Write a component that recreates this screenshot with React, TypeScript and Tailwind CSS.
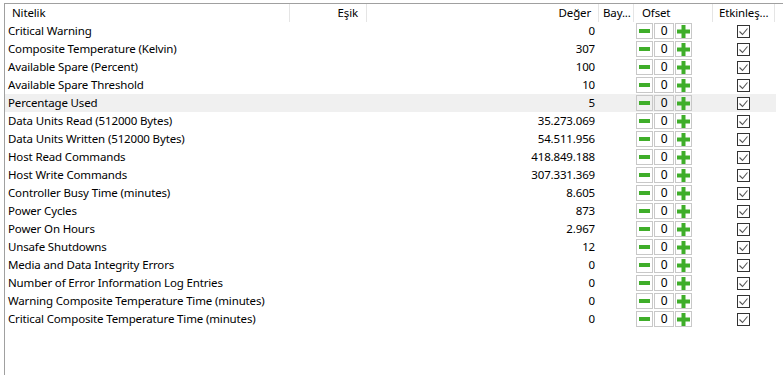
import React from "react";

const rows: [string, string][] = [
  ["Critical Warning", "0"],
  ["Composite Temperature (Kelvin)", "307"],
  ["Available Spare (Percent)", "100"],
  ["Available Spare Threshold", "10"],
  ["Percentage Used", "5"],
  ["Data Units Read (512000 Bytes)", "35.273.069"],
  ["Data Units Written (512000 Bytes)", "54.511.956"],
  ["Host Read Commands", "418.849.188"],
  ["Host Write Commands", "307.331.369"],
  ["Controller Busy Time (minutes)", "8.605"],
  ["Power Cycles", "873"],
  ["Power On Hours", "2.967"],
  ["Unsafe Shutdowns", "12"],
  ["Media and Data Integrity Errors", "0"],
  ["Number of Error Information Log Entries", "0"],
  ["Warning Composite Temperature Time (minutes)", "0"],
  ["Critical Composite Temperature Time (minutes)", "0"],
];

function Offset() {
  return (
    <div className="flex h-[16px] items-stretch">
      <div className="flex w-[17px] items-center justify-center border border-[#c8c8c8]">
        <div className="h-[4px] w-[11px] bg-[#3fae2a]" />
      </div>
      <div className="ml-[1px] flex w-[20px] items-center justify-center border border-[#c8c8c8] text-[12px] leading-none">
        0
      </div>
      <div className="ml-[1px] flex w-[17px] items-center justify-center border border-[#c8c8c8]">
        <svg width="13" height="13" viewBox="0 0 13 13">
          <rect x="4.5" y="0" width="4" height="13" fill="#3fae2a" />
          <rect x="0" y="4.5" width="13" height="4" fill="#3fae2a" />
        </svg>
      </div>
    </div>
  );
}

function Check() {
  return (
    <div className="flex h-[13px] w-[13px] items-center justify-center border border-[#333333] bg-white">
      <svg width="11" height="11" viewBox="0 0 11 11">
        <path d="M1.5 5.5 L4.5 8.5 L9.5 2.5" fill="none" stroke="#555555" strokeWidth="1.1" />
      </svg>
    </div>
  );
}

export default function App() {
  return (
    <div
      className="h-[375px] w-[783px] overflow-hidden bg-white pt-[3px] pl-[4px] text-[11.5px] tracking-[-0.15px] text-black"
      style={{ fontFamily: '"Segoe UI", "Noto Sans", sans-serif' }}
    >
      <div className="h-[372px] border-t border-l border-[#a0a0a0]">
        <div className="flex h-[18px] items-center">
          <div className="w-[285px] border-r border-[#e5e5e5] pl-[7px]">Nitelik</div>
          <div className="w-[77px] border-r border-[#e5e5e5] pr-[8px] text-right">Eşik</div>
          <div className="w-[232px] border-r border-[#e5e5e5] pr-[7px] text-right">Değer</div>
          <div className="w-[35px] border-r border-[#e5e5e5] pl-[4px]">Bay...</div>
          <div className="w-[79px] border-r border-[#e5e5e5] pl-[8px]">Ofset</div>
          <div className="w-[62px] border-r border-[#e5e5e5] pl-[6px]">Etkinleş...</div>
        </div>
        {rows.map(([name, val], i) => (
          <div
            key={name}
            className={`flex h-[18px] w-[771px] items-center ${i === 4 ? "bg-[#f0f0f0]" : ""}`}
          >
            <div className="w-[362px] pl-[3px] whitespace-nowrap">{name}</div>
            <div className="w-[228px] text-right">{val}</div>
            <div className="w-[41px]" />
            <Offset />
            <div className="w-[45px]" />
            <Check />
          </div>
        ))}
      </div>
    </div>
  );
}
